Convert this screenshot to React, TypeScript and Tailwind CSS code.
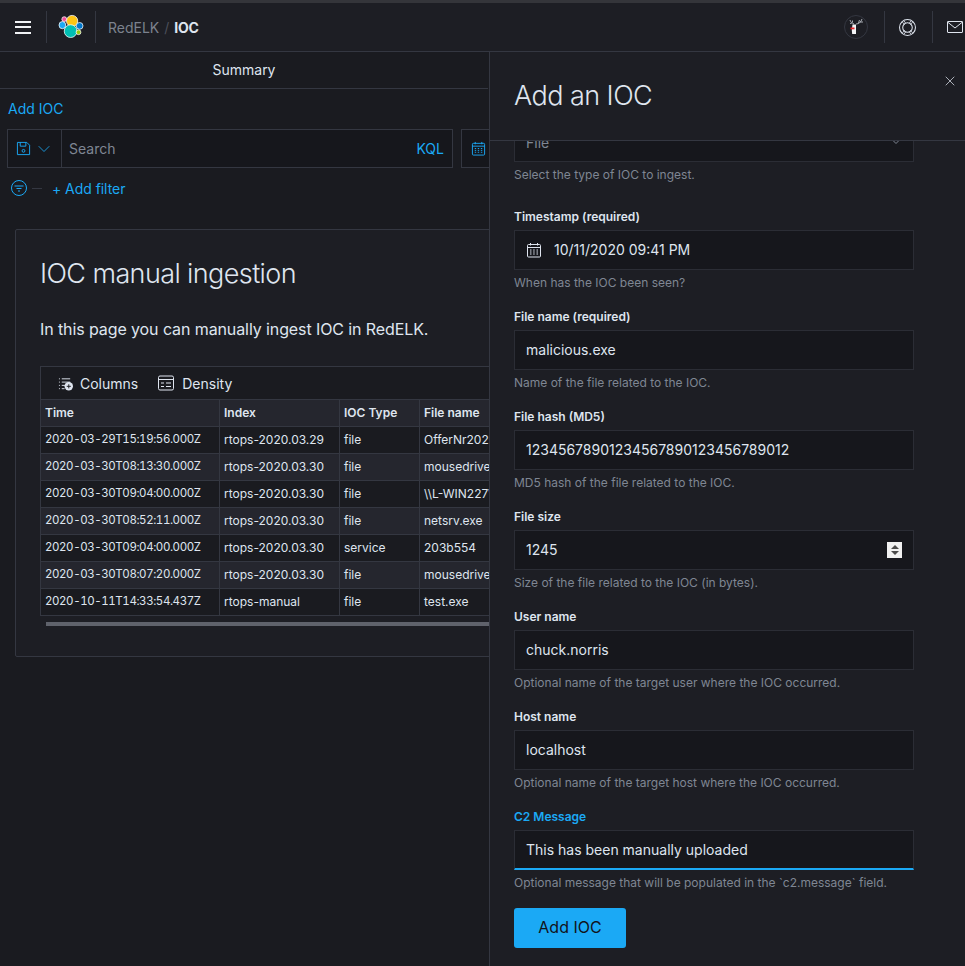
import React from "react";
import { X, ChevronDown } from "lucide-react";

const rows = [
  ["2020-03-29T15:19:56.000Z", "rtops-2020.03.29", "file", "OfferNr2020_final.doc"],
  ["2020-03-30T08:13:30.000Z", "rtops-2020.03.30", "file", "mousedriver.exe"],
  ["2020-03-30T09:04:00.000Z", "rtops-2020.03.30", "file", "\\\\L-WIN227\\share"],
  ["2020-03-30T08:52:11.000Z", "rtops-2020.03.30", "file", "netsrv.exe"],
  ["2020-03-30T09:04:00.000Z", "rtops-2020.03.30", "service", "203b554"],
  ["2020-03-30T08:07:20.000Z", "rtops-2020.03.30", "file", "mousedriver.exe"],
  ["2020-10-11T14:33:54.437Z", "rtops-manual", "file", "test.exe"],
];

const fields = [
  ["File name (required)", "malicious.exe", "Name of the file related to the IOC."],
  ["File hash (MD5)", "12345678901234567890123456789012", "MD5 hash of the file related to the IOC."],
];
const fields2 = [
  ["User name", "chuck.norris", "Optional name of the target user where the IOC occurred."],
  ["Host name", "localhost", "Optional name of the target host where the IOC occurred."],
];

function Calendar({ className }: { className: string }) {
  return (
    <svg viewBox="0 0 16 16" fill="none" stroke="currentColor" className={className}>
      <rect x="1.5" y="2.5" width="13" height="12.5" rx="1" />
      <path d="M1.5 5.5h13M4.5 1v2.5M11.5 1v2.5" />
      <path d="M4 8h1.5M7.2 8h1.5M10.5 8h1.5M4 10h1.5M7.2 10h1.5M10.5 10h1.5M4 12h1.5M7.2 12h1.5M10.5 12h1.5" />
    </svg>
  );
}

function Logo() {
  return (
    <svg viewBox="0 0 32 32" className="w-[24px] h-[24px] overflow-visible">
      <circle cx="17.5" cy="8" r="7.5" fill="#fec514" stroke="#fff" strokeWidth="1" />
      <circle cx="15.5" cy="21.5" r="8.5" fill="#00bfb3" stroke="#fff" strokeWidth="1" />
      <ellipse cx="4.5" cy="13.5" rx="4.5" ry="4.8" fill="#1ba9f5" stroke="#fff" strokeWidth="1" />
      <ellipse cx="27.5" cy="14.5" rx="4.5" ry="4.5" fill="#0077cc" stroke="#fff" strokeWidth="1" />
      <circle cx="7" cy="5.5" r="3.2" fill="#f04e98" stroke="#fff" strokeWidth="1" />
      <circle cx="26" cy="23" r="3.2" fill="#93c90e" stroke="#fff" strokeWidth="1" />
    </svg>
  );
}

function Deer() {
  return (
    <svg viewBox="0 0 24 24" className="w-[24px] h-[24px]">
      <circle cx="12" cy="12" r="11.5" fill="none" stroke="#343741" />
      <path d="M10 9C8 8 6.5 7 6 5M8 8L6 8.5M8.5 7.5V5.5M12 9c3 0 5-2 6-5M14.5 8l1-3M16 7l3 0" stroke="#c9ced6" strokeWidth="0.8" fill="none" />
      <path d="M8.5 9.5h3.5v9.5H8.2l-.4-4z" fill="#f4f5f7" />
      <path d="M6.5 12.5h4v1.8h-4z" fill="#e7262b" />
    </svg>
  );
}

function LifeRing() {
  return (
    <svg viewBox="0 0 16 16" fill="none" stroke="#dfe5ef" className="w-[17px] h-[17px]">
      <circle cx="8" cy="8" r="7.5" />
      <circle cx="8" cy="8" r="4.5" />
      <path d="M3 2.9l2.6 2.4M4.9 1.9l1.6 2.4M13 2.9l-2.6 2.4M11.1 1.9L9.5 4.3M3 13.1l2.6-2.4M4.9 14.1l1.6-2.4M13 13.1l-2.6-2.4M11.1 14.1l-1.6-2.4" strokeWidth="0.8" />
    </svg>
  );
}

function MailIcon() {
  return (
    <svg viewBox="0 0 16 12" fill="none" stroke="#dfe5ef" className="w-[16px] h-[12px] shrink-0">
      <rect x="0.5" y="0.5" width="15" height="11" rx="0.5" />
      <path d="M.5 1l7.5 6 7.5-6" />
    </svg>
  );
}

function Field({ label, value, help, active }: { label: string; value: string; help: string; active?: boolean }) {
  return (
    <div className="mb-[15px]">
      <div className={`h-[19px] pt-px mb-[4px] text-[12px] leading-[18px] font-semibold ${active ? "text-[#1ba9f5]" : "text-[#dfe5ef]"}`}>{label}</div>
      <div className={`h-[40px] bg-[#16171c] border border-[#2b2d35] flex items-center px-[11px] pb-[1px] text-[14px] text-[#dfe5ef] ${active ? "border-b-2 border-b-[#1ba9f5]" : ""}`}>
        {value}
      </div>
      <div className="mt-[4px] h-[18px] text-[12px] leading-[18px] text-[#7f8693]">{help}</div>
    </div>
  );
}

export default function App() {
  return (
    <div className="relative h-[966px] w-[965px] overflow-hidden bg-[#1a1b20] text-[#dfe5ef] text-[14px] border-t-[3px] border-[#34353a]" style={{ fontFamily: "Inter, 'Liberation Sans', sans-serif" }}>
      <header className="h-[49px] bg-[#1d1e24] border-b border-[#343741] flex items-center">
        <div className="w-[47px] h-[32px] flex items-center justify-center border-r border-[#343741]">
          <div className="w-[16px] flex flex-col gap-[3.5px]">
            <span className="h-[2px] bg-[#f0f2f5]" />
            <span className="h-[2px] bg-[#f0f2f5]" />
            <span className="h-[2px] bg-[#f0f2f5]" />
          </div>
        </div>
        <div className="w-[49px] h-[32px] flex items-center justify-center border-r border-[#343741]">
          <Logo />
        </div>
        <div className="ml-[12px] flex items-center text-[14px]">
          <span className="text-[#7c828e]">RedELK</span>
          <span className="mx-[5px] text-[#4b4f5a]">/</span>
          <span className="font-bold text-[#dfe5ef] tracking-[-0.3px]">IOC</span>
        </div>
        <div className="ml-auto flex items-center">
          <div className="w-[24px] h-[24px] mr-[16px]"><Deer /></div>
          <div className="w-[48px] h-[32px] flex items-center justify-center pr-[3px] border-l border-[#343741]">
            <LifeRing />
          </div>
          <div className="w-[33px] h-[32px] flex items-center pl-[14px] border-l border-[#343741]">
            <MailIcon />
          </div>
        </div>
      </header>

      <div className="h-[37px] pb-[2px] border-b border-[#343741] flex items-center justify-center w-[488px] text-[14px] text-[#dfe5ef]">Summary</div>

      <div className="h-[40px] pl-[8px] pb-[2px] flex items-center text-[14px] text-[#1ba9f5]">Add IOC</div>

      <div className="flex pl-[7px] gap-[8px]">
        <div className="w-[446px] h-[39px] flex border border-[#343741] bg-[#16171c]">
          <div className="w-[54px] flex items-center justify-center gap-[3px] border-r border-[#343741] text-[#1ba9f5]">
            <svg viewBox="0 0 16 16" fill="none" stroke="currentColor" className="w-[15px] h-[15px]">
              <path d="M1.5 1.5h10l3 3v10h-13z" />
              <path d="M4.5 1.5v4h6v-4" />
              <circle cx="8" cy="10.5" r="1.5" />
            </svg>
            <ChevronDown className="w-[20px] h-[20px]" strokeWidth={1} />
          </div>
          <div className="flex-1 flex items-center px-[7px] text-[#7f8693]">Search</div>
          <div className="flex items-center pr-[8px] text-[#1ba9f5]">KQL</div>
        </div>
        <div className="flex-1 h-[39px] border border-[#343741] bg-[#16171c] flex items-center pl-[9px] text-[#1ba9f5]">
          <Calendar className="w-[15px] h-[15px]" />
        </div>
      </div>

      <div className="h-[42px] pl-[11px] pb-[2px] flex items-center text-[14px] text-[#1ba9f5]">
        <svg viewBox="0 0 16 16" fill="none" stroke="currentColor" className="w-[16px] h-[16px]">
          <circle cx="8" cy="8" r="7.5" />
          <path d="M3.5 6h9M5.5 8.5h5M7 11h2" />
        </svg>
        <span className="ml-[5px] mr-[10px] w-[10px] h-px bg-[#343741]" />
        <span className="tracking-[-0.05px]">+ Add filter</span>
      </div>

      <section className="mt-[19px] ml-[15px] w-[935px] h-[428px] bg-[#1d1e24] border border-[#343741] rounded-[2px] pt-[24px] px-[24px]">
        <h1 className="text-[27px] leading-[40px] font-light tracking-[-0.6px] text-[#dfe5ef]">IOC manual ingestion</h1>
        <p className="mt-[24px] text-[16px] leading-[24px] -translate-y-px tracking-[-0.1px] text-[#dfe5ef]">In this page you can manually ingest IOC in RedELK.</p>
        <div className="mt-[24px] w-[870px] border border-[#343741] bg-[#1a1b20] text-[12px]">
          <div className="h-[32px] flex items-center pl-[17px] text-[14px] text-[#dfe5ef]">
            <svg viewBox="0 0 16 16" fill="none" stroke="currentColor" className="w-[15px] h-[15px]">
              <path d="M1 3h1M4 3h9M1 6.5h1M4 6.5h9M1 10h1M4 10h4M1 13.5h1M4 13.5h3" />
              <circle cx="11.5" cy="11" r="4.5" fill="currentColor" stroke="none" />
              <path d="M11.5 8.8v4.4M9.3 11h4.4" stroke="#1a1b20" />
            </svg>
            <span className="ml-[7px]">Columns</span>
            <svg viewBox="0 0 16 16" fill="none" stroke="currentColor" className="ml-[20px] w-[16px] h-[16px]">
              <rect x="0.5" y="1" width="15" height="14" rx="1.5" />
              <path d="M.5 4.5h15M3 8h3M8 8h5M3 11.5h3M8 11.5h5" />
            </svg>
            <span className="ml-[8px]">Density</span>
          </div>
          <div className="grid grid-cols-[178px_120px_80px_1fr] border-t border-[#343741] h-[27px] bg-[#25262e] font-semibold items-center">
            {["Time", "Index", "IOC Type", "File name"].map((h, i) => (
              <div key={h} className={`h-full flex items-center pl-[4px] ${i ? "border-l border-[#343741]" : ""}`}>{h}</div>
            ))}
          </div>
          {rows.map((r, i) => (
            <div key={i} className={`grid grid-cols-[178px_120px_80px_1fr] border-t border-[#343741] h-[27px] ${i % 2 ? "bg-[#25262e]" : "bg-[#1a1b20]"}`}>
              {r.map((c, j) => (
                <div key={j} className={`h-full flex items-center pl-[4px] whitespace-nowrap ${j === 0 ? "tabular-nums text-[11.5px] tracking-[-0.42px]" : "border-l border-[#343741]"}`}>{c}</div>
              ))}
            </div>
          ))}
        </div>
        <div className="mt-[6px] ml-[6px] w-[860px] h-[4px] bg-[#5f626b]" />
      </section>

      <aside className="absolute top-[49px] right-0 bottom-0 w-[476px] bg-[#1d1e24] border-l border-[#343741] flex flex-col">
        <div className="h-[89px] shrink-0 border-b border-[#343741] pl-[24px] flex items-center relative">
          <h2 className="text-[27px] font-light tracking-[-0.55px] text-[#dfe5ef]">Add an IOC</h2>
          <X className="absolute right-[7px] top-[21px] w-[16px] h-[16px] text-[#dfe5ef]" strokeWidth={1.1} />
        </div>
        <div className="flex-1 overflow-hidden pl-[24px] w-[424px]">
          <div className="-mt-[19px]">
            <div className="h-[40px] w-[400px] bg-[#16171c] border border-[#2b2d35] flex items-center justify-between px-[11px] text-[14px] text-[#7f8693]">
              <span>File</span>
              <ChevronDown className="w-[12px] h-[12px]" />
            </div>
            <div className="mt-[4px] h-[18px] text-[12px] leading-[18px] text-[#7f8693] mb-[23px]">Select the type of IOC to ingest.</div>

            <div className="mb-[15px]">
              <div className="h-[19px] pt-px mb-[4px] text-[12px] leading-[18px] font-semibold">Timestamp (required)</div>
              <div className="h-[40px] bg-[#16171c] border border-[#2b2d35] flex items-center pl-[11px] pb-[1px] text-[14px]">
                <Calendar className="w-[16px] h-[16px]" />
                <span className="ml-[12px]">10/11/2020 09:41 PM</span>
              </div>
              <div className="mt-[4px] h-[18px] text-[12px] leading-[18px] text-[#7f8693]">When has the IOC been seen?</div>
            </div>

            {fields.map(([l, v, h]) => <Field key={l} label={l} value={v} help={h} />)}

            <div className="mb-[15px]">
              <div className="h-[19px] pt-px mb-[4px] text-[12px] leading-[18px] font-semibold">File size</div>
              <div className="h-[40px] bg-[#16171c] border border-[#2b2d35] flex items-center justify-between pl-[11px] pr-[11px] text-[14px]">
                <span className="-mt-px">1245</span>
                <span className="w-[15px] h-[16px] bg-[#f0f0f0] flex flex-col items-center justify-center gap-[2px]">
                  <span className="w-0 h-0 border-x-[4px] border-x-transparent border-b-[4px] border-b-[#4a4a4a]" />
                  <span className="w-0 h-0 border-x-[4px] border-x-transparent border-t-[4px] border-t-[#4a4a4a]" />
                </span>
              </div>
              <div className="mt-[4px] h-[18px] text-[12px] leading-[18px] text-[#7f8693]">Size of the file related to the IOC (in bytes).</div>
            </div>

            {fields2.map(([l, v, h]) => <Field key={l} label={l} value={v} help={h} />)}

            <Field active label="C2 Message" value="This has been manually uploaded" help="Optional message that will be populated in the `c2.message` field." />

            <button className="block w-[112px] h-[40px] pb-[2px] rounded-[3px] bg-[#1ba9f5] text-[#12131a] text-[16px] text-center mt-[16px]">Add IOC</button>
          </div>
        </div>
      </aside>
    </div>
  );
}
